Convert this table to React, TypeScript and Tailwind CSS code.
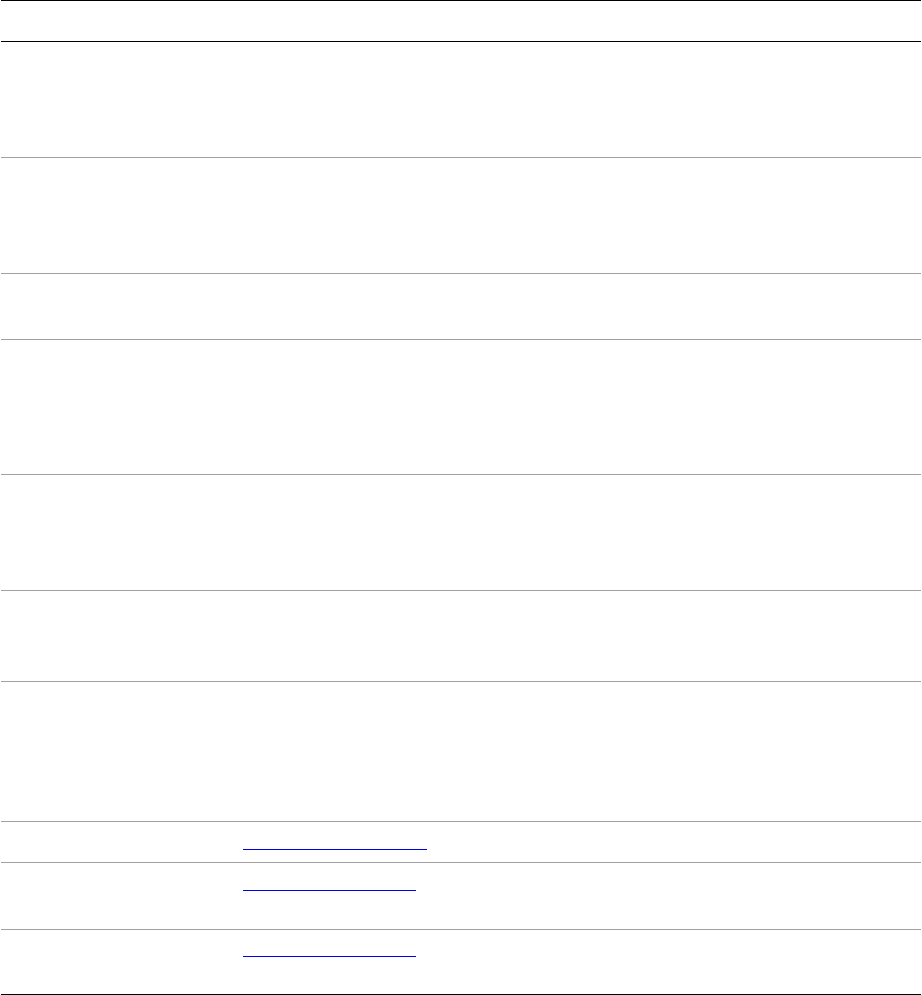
const rows: { h: string; link?: string }[] = [
  { h: "h-[116px]" },
  { h: "h-[116px]" },
  { h: "h-[66px]" },
  { h: "h-[135px]" },
  { h: "h-[116px]" },
  { h: "h-[91px]" },
  { h: "h-[140px]" },
  { h: "h-[41px]", link: "w-[184px] mt-[27px]" },
  { h: "h-[67px]", link: "w-[173px] mt-[27px]" },
  { h: "h-[64px]", link: "w-[173px] mt-[26px]" },
];

export default function App() {
  return (
    <div className="min-h-screen bg-white font-['Liberation_Sans',sans-serif] text-[13px]">
      <div className="ml-px w-[920px] border-b border-black">
        <div className="grid h-[42px] grid-cols-[242px_1fr] border-y border-black" />
        {rows.map((row, i) => (
          <div
            key={i}
            className={`grid grid-cols-[242px_1fr] ${row.h} ${i < rows.length - 1 ? "border-b border-[#a0a0a0]" : ""}`}
          >
            <div />
            <div>
              {row.link && (
                <a href="#" className={`block h-px bg-[#0000ee] ${row.link}`} aria-label="link" />
              )}
            </div>
          </div>
        ))}
      </div>
    </div>
  );
}
